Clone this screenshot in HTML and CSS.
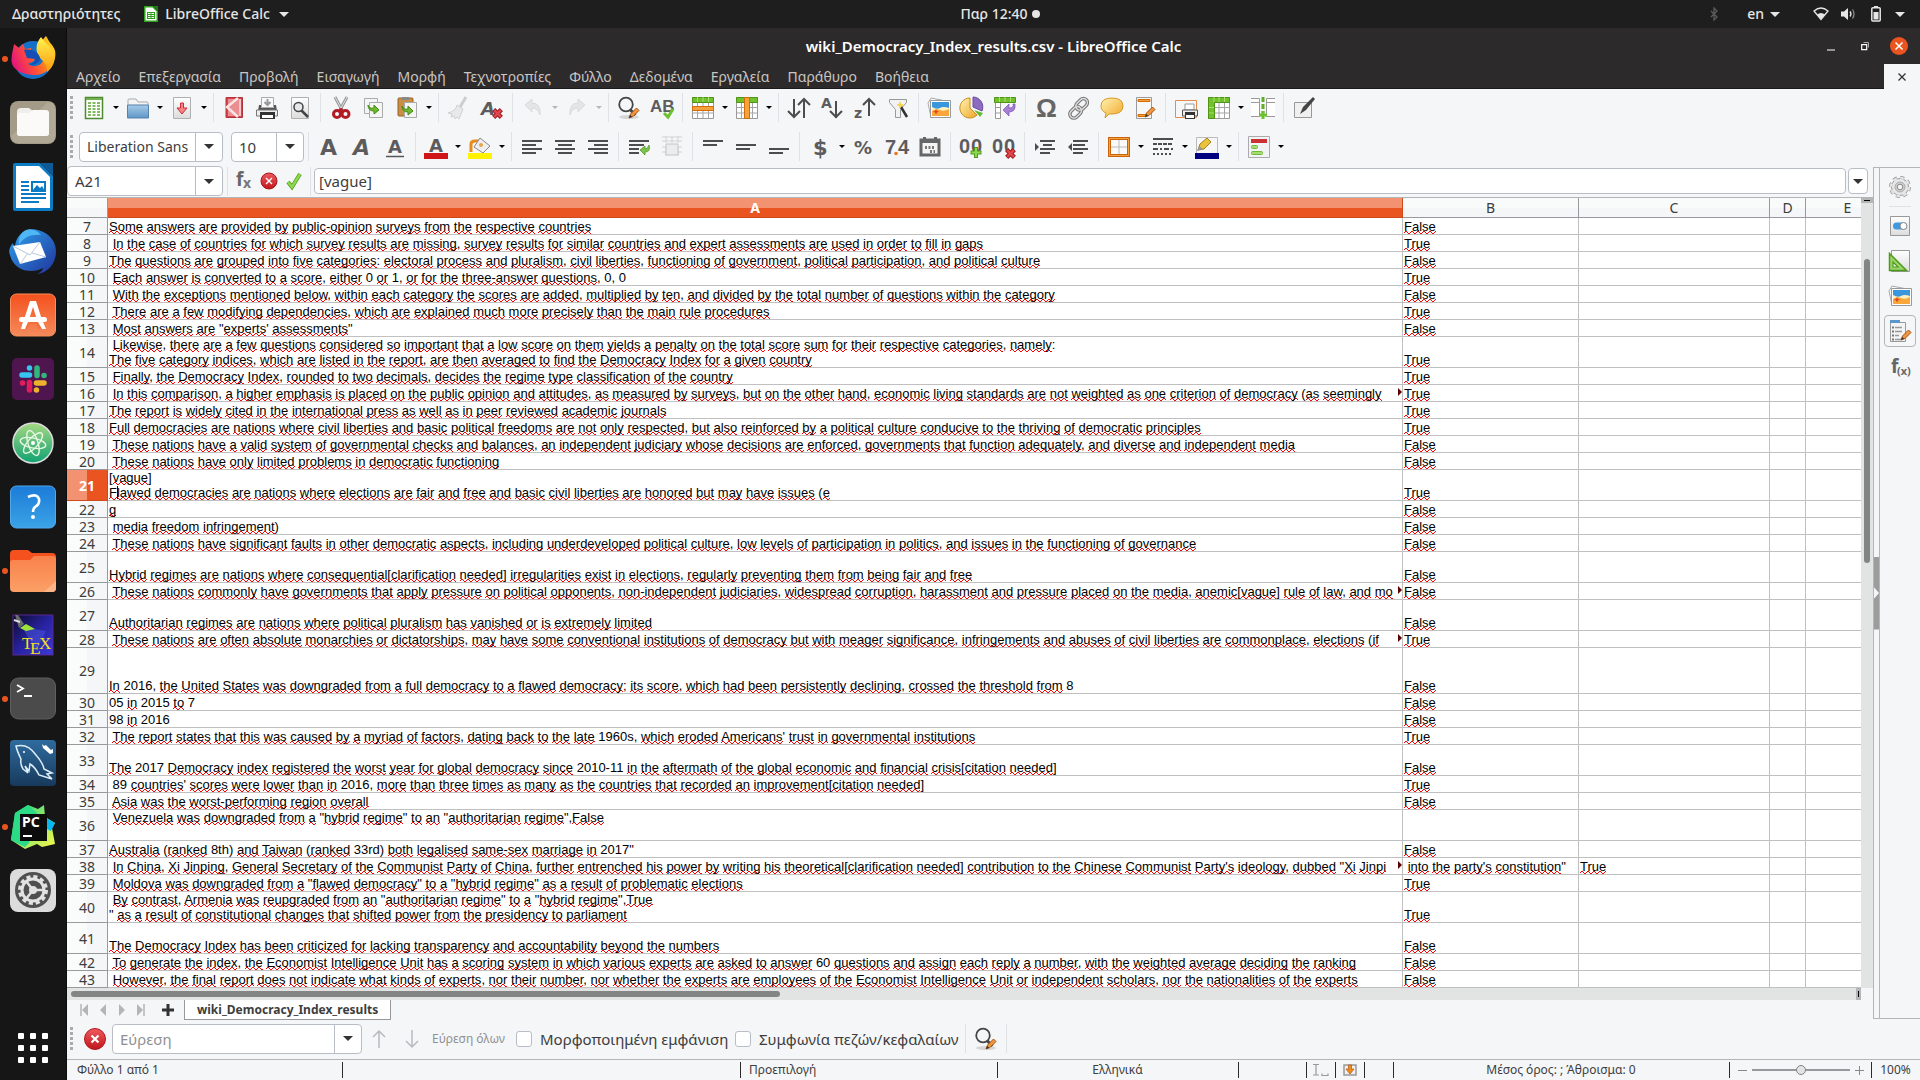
FILE: index.html
```html
<!DOCTYPE html>
<html lang="el">
<head>
<meta charset="utf-8">
<title>wiki_Democracy_Index_results.csv - LibreOffice Calc</title>
<link rel="stylesheet" href="styles.css">
</head>
<body>
<svg width="0" height="0" class="defs" aria-hidden="true">
  <defs>
    <linearGradient id="gFox" x1="0" y1="0.6" x2="1" y2="0.2"><stop offset="0" stop-color="#e3187b"/><stop offset=".35" stop-color="#ff4a3b"/><stop offset=".7" stop-color="#ff9412"/><stop offset="1" stop-color="#ffe22b"/></linearGradient>
    <linearGradient id="gFlame" x1="0" y1="0" x2="0" y2="1"><stop offset="0" stop-color="#fff44f"/><stop offset="1" stop-color="#ff980e"/></linearGradient>
    <linearGradient id="gBird" x1="0" y1="0" x2="1" y2="1"><stop offset="0" stop-color="#2fa3ee"/><stop offset="1" stop-color="#20339b"/></linearGradient>
    <linearGradient id="gSoft" x1="0" y1="0" x2="0" y2="1"><stop offset="0" stop-color="#f4511e"/><stop offset="1" stop-color="#f58a5b"/></linearGradient>
    <linearGradient id="gAtom" x1="0" y1="0" x2="0" y2="1"><stop offset="0" stop-color="#a5d982"/><stop offset="1" stop-color="#0fa273"/></linearGradient>
    <linearGradient id="gHelp" x1="0" y1="0" x2="0" y2="1"><stop offset="0" stop-color="#1c7bd8"/><stop offset="1" stop-color="#3ba3e6"/></linearGradient>
    <linearGradient id="gOrange" x1="0" y1="0" x2="0" y2="1"><stop offset="0" stop-color="#f9814b"/><stop offset="1" stop-color="#fba066"/></linearGradient>
    <linearGradient id="gTex" x1="0" y1="0" x2="1" y2="1"><stop offset="0" stop-color="#0b0b28"/><stop offset=".5" stop-color="#2822a0"/><stop offset="1" stop-color="#3b3bd8"/></linearGradient>
    <linearGradient id="gSql" x1="0" y1="0" x2="0" y2="1"><stop offset="0" stop-color="#2f6b9e"/><stop offset="1" stop-color="#173a5c"/></linearGradient>
    <linearGradient id="gPc" x1="0" y1="0" x2="1" y2="1"><stop offset="0" stop-color="#21d789"/><stop offset="1" stop-color="#fcf84a"/></linearGradient>
    <linearGradient id="gPaper" x1="0" y1="0" x2="0" y2="1"><stop offset="0" stop-color="#ffffff"/><stop offset="1" stop-color="#dcdcdc"/></linearGradient>
    <linearGradient id="gBlue" x1="0" y1="0" x2="0" y2="1"><stop offset="0" stop-color="#a8cbe8"/><stop offset="1" stop-color="#5f97c6"/></linearGradient>
    <linearGradient id="gGold" x1="0" y1="0" x2="1" y2="1"><stop offset="0" stop-color="#fff3b0"/><stop offset="1" stop-color="#f0a62a"/></linearGradient>
    <linearGradient id="gRed" x1="0" y1="0" x2="0" y2="1"><stop offset="0" stop-color="#ef5a5f"/><stop offset="1" stop-color="#c0171c"/></linearGradient>
    <symbol id="paper" viewBox="0 0 24 24"><path d="M3.500 1.500h17v21h-17z" fill="url(#gPaper)" stroke="#b0b0b0"/></symbol>
    <symbol id="pencil" viewBox="0 0 12 12"><path d="M1 11l1.500-4L8.500 1l2.500 2.500-6 6z" fill="#f0953a" stroke="#a3561a"/><path d="M1 11l1.300-3 1.800 1.800z" fill="#333"/></symbol>
    <symbol id="lens" viewBox="0 0 24 24"><ellipse cx="12" cy="21" rx="10" ry="2" fill="#d5d6d8"/><path d="M12.500 13l6 6" stroke="#444" stroke-width="3"/><circle cx="9" cy="8.500" r="6.800" fill="#f4f6f8" stroke="#454545" stroke-width="1.800"/></symbol>
    <symbol id="photo" viewBox="0 0 24 24"><path d="M1 7L4 2l15 3v14l-15 2z" fill="#fafafa" stroke="#a9a9a9"/><path d="M3.500 4.500h20v17h-20z" fill="#fff" stroke="#999"/><path d="M5 6h17v14H5z" fill="#3a96dd"/><path d="M5 11q5 3 8 1t9 0v8H5z" fill="#fff0c0"/><path d="M5 15q4-3 8-1t9-1v7H5z" fill="#f9a73b"/><path d="M9 13l1 2 2 .5-2 1-1 2-1-2-2-1 2-.5z" fill="#e8441d"/></symbol>
    <symbol id="cross" viewBox="0 0 10 10"><path d="M1.500 1.500l7 7m0-7l-7 7" stroke="#9e1b22" stroke-width="4"/><path d="M2 2l6 6m0-6l-6 6" stroke="#e1464d" stroke-width="2.200"/></symbol>
    <symbol id="grid" viewBox="0 0 24 24"><path d="M1.500 1.500h21v21h-21z" fill="#fff" stroke="#999"/><path d="M1.500 6.500h21M1.500 11.500h21M1.500 17h21M6.500 1.500v21M12 1.500v21M17.500 1.500v21" stroke="#a5a5a5" fill="none"/></symbol>
  </defs>
</svg>

<header class="topbar">
  <div class="top-left"><button class="top-btn">Δραστηριότητες</button>
    <button class="top-btn app"><svg width="14" height="16" viewBox="0 0 14 16"><path d="M0 0h9l5 5v11H0z" fill="#2ba11a"/><path d="M1.500 1.500h7l4 4v9h-11z" fill="#fff"/><path d="M9 0h5v5z" fill="#1d7d12"/><path d="M3 6h8v7H3z" fill="#2ba11a"/><path d="M4 7.500h2.500M7.500 7.500H10M4 9.500h2.500M7.500 9.500H10M4 11.500h2.500M7.500 11.500H10" stroke="#fff"/></svg><span>LibreOffice Calc</span><i class="tri"></i></button></div>
  <button class="top-btn clock">Παρ 12:40<i class="dot"></i></button>
  <div class="top-right">
    <svg class="bt" width="8" height="14" viewBox="0 0 8 14"><path d="M1 4l6 6-3 3V1l3 3-6 6" fill="none" stroke="#5c5c5c" stroke-width="1.300"/></svg>
    <button class="top-btn lang">en<i class="tri"></i></button>
    <svg class="wifi" width="16" height="14" viewBox="0 0 16 14"><path d="M1 4q7-6 14 0L8 12.500z" fill="none" stroke="#e6e6e6" stroke-width="1.300"/><path d="M4 7.500q4-3 8 0l-4 5z" fill="#e6e6e6"/></svg>
    <svg class="vol" width="16" height="14" viewBox="0 0 16 14"><path d="M0 4.500h3L7 1v12L3 9.500H0z" fill="#e6e6e6"/><path d="M9 4.500q2 2.500 0 5" fill="none" stroke="#e6e6e6" stroke-width="1.300"/><path d="M11.500 2.500q3 4.500 0 9" fill="none" stroke="#888" stroke-width="1.300"/></svg>
    <svg class="bat" width="10" height="16" viewBox="0 0 10 16"><path d="M3 0h4v2H3z" fill="#e6e6e6"/><rect x=".8" y="1.800" width="8.400" height="13.200" rx="1" fill="none" stroke="#e6e6e6" stroke-width="1.500"/><path d="M2.500 6h5v7.500h-5z" fill="#e6e6e6"/></svg>
    <i class="tri"></i>
  </div>
</header>

<div class="desktop">
<nav class="dock" aria-label="Dock">
  <a class="run" href="#"><svg width="46" height="46" viewBox="0 0 46 46"><circle cx="23" cy="24" r="19" fill="#1670c8"/><path d="M4 8l5 4 4-4 2 5 6-1c1 2-1 4-3 5l-1 4 8 1c0 3-4 5-7 5 3 5 12 4 15-2 4-8-2-13-2-16 0-4 3-7 5-9 2 3 3 6 6 9 3 4 4 7 3 13-2 10-10 17-20 17S1.500 35 1.500 24C1.500 18 3 14 4 8z" fill="url(#gFox)"/><path d="M31 1c2 4 11 10 13 17 2 8-2 14-7 18 0-7-2-9-6-13-6-6-6-15 0-22z" fill="url(#gFlame)"/><path d="M14 14c8-2 16 3 16 9-1 5-8 7-12 5 4 0 7-2 7-5l-8-1z" fill="#1450b4"/></svg></a>
  <a href="#"><svg width="46" height="46" viewBox="0 0 46 46"><rect x="0" y="1" width="46" height="43" rx="8" fill="#a39a88"/><path d="M1 36L38 2q7 0 7 7v27q0 7-7 7H8q-6 0-7-7z" fill="#b1a896"/><path d="M7 12q0-4 4-4h8l4 3h12q4 0 4 4v18q0 3-3 3H10q-3 0-3-3z" fill="#f0eeea"/><path d="M7 16q0-3 3-3h9l4-3h13q3 0 3 3v20q0 3-3 3H10q-3 0-3-3z" fill="#fbfaf8"/></svg></a>
  <a href="#"><svg width="46" height="48" viewBox="0 0 46 48"><path d="M3 2q0-2 2-2h25l13 13v33q0 2-2 2H5q-2 0-2-2z" fill="#0b7cc4"/><path d="M6 3h23l11 11v31H6z" fill="#fff"/><path d="M30 0h13v13z" fill="#0d5b96"/><path d="M11 19h8M11 23h8M11 27h8M11 31h25M11 35h25M11 39h18" stroke="#0b7cc4" stroke-width="2"/><path d="M22 19h13v9H22z" fill="#fff" stroke="#0b7cc4" stroke-width="2"/><path d="M22 28l5-6 3 3 2-2 3 5z" fill="#0b7cc4"/></svg></a>
  <a href="#"><svg width="48" height="48" viewBox="0 0 48 48"><path d="M14 5C24-2 42 5 46 18c4 14-5 28-18 29 4-2 6-4 6-6-10 6-29 4-33-13-2-4 0-9 3-12 0 2 1 3 2 3 1-7 4-11 8-14z" fill="url(#gBird)"/><path d="M17 3c-6 3-8 9-7 15 4-8 13-11 22-10C28 3 22 1 17 3z" fill="#4fb7f5"/><path d="M4 19l27-4 6 15-26 7z" fill="#fff"/><path d="M4 19l17 9 10-13M11 37l8-11M37 30L23 26" stroke="#b9c8da" fill="none"/></svg></a>
  <a href="#"><svg width="46" height="46" viewBox="0 0 46 46"><rect x=".5" y="2" width="45" height="42" rx="6" fill="url(#gSoft)" stroke="#f8905d"/><path d="M20 9h6l8 25h-5L23 15l-6 19h-5z" fill="#fff"/><path d="M17 30h12l4 7h-4l-3-5h-6l-3 5h-5z" fill="#f4713c"/><rect x="9" y="25" width="28" height="5" rx="2.500" fill="#fff"/><path d="M13 30h5l-3 7h-4zM28 30h5l3 7h-4z" fill="#fff"/></svg></a>
  <a href="#"><svg width="42" height="42" viewBox="0 0 42 42"><rect width="42" height="42" rx="5" fill="#4f154f"/><g stroke-width="5.500" stroke-linecap="round"><path d="M10 17h7.500M17.500 10v.1" stroke="#36c5f0"/><path d="M25 10v7.500M32 17.500h.1" stroke="#2eb67d"/><path d="M32 25h-7.500M24.500 32v.1" stroke="#ecb22e"/><path d="M17.500 32v-7.500M10.500 25h.1" stroke="#e01e5a"/></g></svg></a>
  <a href="#"><svg width="42" height="42" viewBox="0 0 42 42"><circle cx="21" cy="21" r="20" fill="url(#gAtom)" stroke="#ddd" stroke-width="1.500"/><g fill="none" stroke="#e9f7e4" stroke-width="1.400"><ellipse cx="21" cy="21" rx="13" ry="5" transform="rotate(12 21 21)"/><ellipse cx="21" cy="21" rx="13" ry="5" transform="rotate(72 21 21)"/><ellipse cx="21" cy="21" rx="13" ry="5" transform="rotate(132 21 21)"/></g><circle cx="21" cy="21" r="2" fill="#fff"/></svg></a>
  <a href="#"><svg width="46" height="46" viewBox="0 0 46 46"><rect x=".5" y="2" width="45" height="42" rx="6" fill="url(#gHelp)" stroke="#53a8ea"/><path d="M18 13q9-4 11 2 1 5-4 8-2 2-2 5" fill="none" stroke="#fff" stroke-width="2.600"/><circle cx="23" cy="33" r="2" fill="#fff"/></svg></a>
  <a class="run" href="#"><svg width="46" height="46" viewBox="0 0 46 46"><path d="M0 6q0-4 4-4h14l4 3h20q4 0 4 4v10H0z" fill="#f4511e"/><path d="M0 15q0-3 3-3h17l4-4h19q3 0 3 3v29q0 4-4 4H4q-4 0-4-4z" fill="url(#gOrange)"/><path d="M34 44l12-11v7q0 4-4 4z" fill="#fdb588"/></svg></a>
  <a href="#"><svg width="42" height="42" viewBox="0 0 42 42"><rect x="1" y="1" width="40" height="40" fill="url(#gTex)" stroke="#5b2691"/><path d="M10 13l24 4-10 20z" fill="#4a5ae0" opacity=".5"/><path d="M3 1h3l6 9-5 4z" fill="#6b6b70"/><path d="M2 6l6 2" stroke="#ddd" stroke-width="2"/><path d="M8 14l6-4 9 5-9 2z" fill="#9be23a"/><text x="10" y="35" class="tex">T</text><text x="18" y="40" class="tex">E</text><text x="27" y="35" class="tex">X</text></svg></a>
  <a class="run" href="#"><svg width="46" height="46" viewBox="0 0 46 46"><rect x=".5" y="2" width="45" height="41" rx="8" fill="#4b4b4b" stroke="#5f5f5f"/><path d="M7 9l6 3.500L7 16M14 20h8" fill="none" stroke="#fff" stroke-width="1.800"/></svg></a>
  <a href="#"><svg width="46" height="46" viewBox="0 0 46 46"><rect width="46" height="46" rx="4" fill="url(#gSql)"/><path d="M6 6q12-3 20 9 7 8 8 14l8 4-5 1 5 5-13-4q-4-8-9-11l-1 7-4-5 3 7-5-4q-3-5-2-10-4-8-5-13z" fill="none" stroke="#dcecf8" stroke-width="1.500"/><circle cx="14" cy="12" r="1" fill="#fff"/><path d="M32 4q2 3 4 1l5 5 2-1v4l-3 1-7-6z" fill="#fff"/></svg></a>
  <a class="run" href="#"><svg width="46" height="46" viewBox="0 0 46 46"><path d="M5 9L18 1l10 4 6-4 1 12 10 6-3 5 3 16-13 3-5-3-12 5L1 36z" fill="url(#gPc)"/><path d="M35 13l10 6-4 8-6-3z" fill="#08b8f0"/><path d="M5 9L18 1l9 8-8 30-4 4L1 36z" fill="#2bdb86"/><path d="M10 10h27v27H10z" fill="#0c0c0c"/><text x="12" y="23" class="pc">PC</text><path d="M13 32h9" stroke="#fff" stroke-width="2"/></svg></a>
  <a href="#"><svg width="46" height="46" viewBox="0 0 46 46"><rect x="0" y="1" width="46" height="43" rx="8" fill="#dcdcdc"/><circle cx="23" cy="22" r="18" fill="#505050"/><circle cx="23" cy="22" r="13" fill="none" stroke="#e2e2e2" stroke-width="4" stroke-dasharray="4 2.800"/><circle cx="23" cy="22" r="11" fill="none" stroke="#e2e2e2" stroke-width="3"/><path d="M23 22L16 13M23 22h11M23 22l-7 9" stroke="#e2e2e2" stroke-width="2.500"/><circle cx="23" cy="22" r="4" fill="#e2e2e2"/></svg></a>
  <button class="apps" aria-label="Εφαρμογές"><i></i><i></i><i></i><i></i><i></i><i></i><i></i><i></i><i></i></button>
</nav>

<div class="window">
  <div class="titlebar"><h1>wiki_Democracy_Index_results.csv - LibreOffice Calc</h1>
    <div class="winbtns"><button aria-label="Ελαχιστοποίηση"><svg width="8" height="9"><path d="M0 8h8" stroke="#fff" stroke-width="1"/></svg></button><button aria-label="Επαναφορά"><svg width="8" height="8" viewBox="0 0 8 8"><path d="M.7 2.700h5v5h-5z" fill="none" stroke="#fff" stroke-width="1.200"/><path d="M2.500.5h5v5" fill="none" stroke="#aaa"/></svg></button><button aria-label="Κλείσιμο" class="close"><svg width="8" height="8"><path d="M.5.5l7 7m0-7l-7 7" stroke="#fff" stroke-width="1.500"/></svg></button></div>
  </div>
  <div class="menubar">
    <nav><a href="#">Αρχείο</a><a href="#">Επεξεργασία</a><a href="#">Προβολή</a><a href="#">Εισαγωγή</a><a href="#">Μορφή</a><a href="#">Τεχνοτροπίες</a><a href="#">Φύλλο</a><a href="#">Δεδομένα</a><a href="#">Εργαλεία</a><a href="#">Παράθυρο</a><a href="#">Βοήθεια</a></nav>
    <button class="closedoc" aria-label="Κλείσιμο εγγράφου"><svg width="8" height="8"><path d="M.5.5l7 7m0-7l-7 7" stroke="#333" stroke-width="1.300"/></svg></button>
  </div>

  <div class="toolbar">
    <i class="grip"></i>
    <button class="tb"><svg viewBox="0 0 24 24"><path d="M3.500 1.500h17v21h-17z" fill="#fff" stroke="#4b8a2e" stroke-width="1.500"/><path d="M4 2h16v2H4z" fill="#72b24c"/><path d="M6 7h12M6 10h12M6 13h12M6 16h12M6 19h12" stroke="#5ba32e" stroke-width="1.500" stroke-dasharray="3 1.500"/></svg></button><button class="dd"></button>
    <button class="tb"><svg viewBox="0 0 24 24"><path d="M2 4q0-1 1-1h7l2 3h9q1 0 1 1v5H2z" fill="#f4f4f4" stroke="#aaa"/><path d="M1.500 9h21v13h-21z" fill="url(#gBlue)" stroke="#5583ab"/></svg></button><button class="dd"></button>
    <button class="tb"><svg viewBox="0 0 24 24"><use href="#paper"/><path d="M10.500 7h3v5h3.500l-5 6-5-6h3.500z" fill="#f3848a" stroke="#cf2b35"/></svg></button><button class="dd"></button>
    <i class="sep"></i>
    <button class="tb"><svg viewBox="0 0 24 24"><path d="M4 1.500h16.500v20H4z" fill="#d8434b" stroke="#b0343b"/><path d="M6 3h13v17H6z" fill="#ea8e92"/><path d="M16 2L5 11l11 10" fill="none" stroke="#fbe4e4" stroke-width="2.500"/><path d="M18 3v17" stroke="#fff" stroke-width="1"/></svg></button>
    <button class="tb"><svg viewBox="0 0 24 24"><path d="M6.500 1.500h12v10h-12z" fill="#fafafa" stroke="#aaa"/><path d="M12.500 3v5m-3-2l3 3 3-3" fill="none" stroke="#999" stroke-width="2"/><path d="M4 9h2v3h13V9h2l1 6H3z" fill="#555"/><path d="M1.500 14h21v6h-21z" fill="#eee" stroke="#777"/><path d="M5 16h15v7H5z" fill="#333"/><path d="M7 19h11v3H7z" fill="#fff"/></svg></button>
    <button class="tb"><svg viewBox="0 0 24 24"><use href="#paper"/><path d="M13 14l7 7" stroke="#444" stroke-width="2.500"/><circle cx="10.500" cy="11" r="4.500" fill="#e4e8ea" stroke="#444" stroke-width="1.500"/></svg></button>
    <i class="sep"></i>
    <button class="tb"><svg viewBox="0 0 24 24"><path d="M6 1l7 13M18 1l-7 13" stroke="#999" stroke-width="3"/><path d="M6 1l7 13M18 1l-7 13" stroke="#ddd"/><circle cx="8" cy="18" r="3.500" fill="none" stroke="#b21b24" stroke-width="3"/><circle cx="16.500" cy="18" r="3.500" fill="none" stroke="#b21b24" stroke-width="3"/><circle cx="12" cy="14" r="2" fill="#b21b24"/></svg></button>
    <button class="tb"><svg viewBox="0 0 24 24"><path d="M2.500 2.500h13v15h-13z" fill="#f5f5f5" stroke="#aaa"/><path d="M7.500 6.500h13v15h-13z" fill="#f5f5f5" stroke="#aaa"/><path d="M6 9q1 4 6 3V9l5 5-5 4v-3q-6 0-6-6z" fill="#6fb92c" stroke="#458818"/></svg></button>
    <button class="tb"><svg viewBox="0 0 24 24"><rect x="3" y="2" width="15" height="18" rx="1" fill="#c98f45" stroke="#946322"/><path d="M7 1h7v3H7z" fill="#888"/><path d="M9.500 6.500h12v15h-12z" fill="#f5f5f5" stroke="#aaa"/><path d="M7 10q1 4 6 3v-3l5 5-5 4v-3q-6 0-6-6z" fill="#6fb92c" stroke="#458818"/></svg></button><button class="dd"></button>
    <i class="sep"></i>
    <button class="tb faded"><svg viewBox="0 0 24 24"><path d="M19 1l-6 10" stroke="#c5c5c5" stroke-width="3"/><path d="M10 9l6 4-4 10-2-2-2 2-1-3-3 1 1-3-4-1q8-2 9-8z" fill="#e6e6e6" stroke="#c9c9c9"/></svg></button>
    <button class="tb"><svg viewBox="0 0 24 24"><text x="1" y="19" class="ital big">A</text><use href="#cross" x="12" y="12" width="11" height="11"/></svg></button>
    <i class="sep"></i>
    <button class="tb faded"><svg viewBox="0 0 24 24"><path d="M4 9l7-6v4q9 0 8 12-2-7-8-7v4z" fill="#dfe1e3" stroke="#d2d4d6"/></svg></button><button class="dd off"></button>
    <button class="tb faded"><svg viewBox="0 0 24 24"><path d="M20 9l-7-6v4q-9 0-8 12 2-7 8-7v4z" fill="#dfe1e3" stroke="#d2d4d6"/></svg></button><button class="dd off"></button>
    <i class="sep"></i>
    <button class="tb"><svg viewBox="0 0 24 24"><use href="#lens"/><use href="#pencil" x="11" y="11" width="12" height="12"/></svg></button>
    <button class="tb"><svg viewBox="0 0 24 24"><text x="0" y="16" class="ab">AB</text><path d="M14 17l4 4 5-8" fill="none" stroke="#6cc22e" stroke-width="3"/></svg></button>
    <i class="sep"></i>
    <button class="tb"><svg viewBox="0 0 24 24"><use href="#grid"/><path d="M1.500 1.500h21v5h-21z" fill="#72c02c" stroke="#4f9417"/><path d="M6.500 1v5M12 1v5M17.500 1v5" stroke="#a6e070"/><path d="M1.500 10.500h21v4h-21z" fill="#f6a13a" stroke="#d16c0a"/></svg></button><button class="dd"></button>
    <button class="tb"><svg viewBox="0 0 24 24"><use href="#grid"/><path d="M1.500 1.500h21v5h-21z" fill="#72c02c" stroke="#4f9417"/><path d="M9.500 1.500h5v21h-5z" fill="#f6a13a" stroke="#d16c0a"/></svg></button><button class="dd"></button>
    <i class="sep"></i>
    <button class="tb"><svg viewBox="0 0 24 24"><path d="M7 3v18M1 15l6 6 6-6M17 22V3M11 9l6-6 6 6" fill="none" stroke="#4d4d4f" stroke-width="2"/></svg></button>
    <button class="tb"><svg viewBox="0 0 24 24"><text x="1" y="12" class="srt">A</text><path d="M16 5v17M10 15l6 6 6-6" fill="none" stroke="#4d4d4f" stroke-width="2"/></svg></button>
    <button class="tb"><svg viewBox="0 0 24 24"><text x="1" y="22" class="srt">z</text><path d="M16 20V3M10 9l6-6 6 6" fill="none" stroke="#4d4d4f" stroke-width="2"/></svg></button>
    <button class="tb"><svg viewBox="0 0 24 24"><path d="M3.500 3.500h17v3l-6 7v8h-5v-8l-6-7z" fill="#f2f2f2" stroke="#999"/><path d="M15 11l6 10" stroke="#333" stroke-width="2.500"/><path d="M14 6v6M11 9h6" stroke="#f4cf3a" stroke-width="1.500"/></svg></button>
    <i class="sep"></i>
    <button class="tb"><svg viewBox="0 0 24 24"><use href="#photo"/></svg></button>
    <button class="tb"><svg viewBox="0 0 24 24"><path d="M10 12V2a10 10 0 1 0 7 17z" fill="url(#gGold)" stroke="#c58b1c"/><path d="M13 11V1a10 10 0 0 1 9 14z" fill="#8d6bc0" stroke="#6b4da0"/><path d="M14 14l9 3-3 4z" fill="#6bb838"/></svg></button>
    <button class="tb"><svg viewBox="0 0 24 24"><path d="M2.500 6.500h5v16h-5zM2.500 11.500h5M2.500 17h5" fill="#fff" stroke="#999"/><path d="M1.500 1.500h21v5h-21z" fill="#72c02c" stroke="#4f9417"/><path d="M6.500 1v5M12 1v5M17.500 1v5" stroke="#a6e070"/><path d="M22 8q1 8-6 8v4l-6-6 6-6v4q5 0 4-4z" fill="#a57ed6" stroke="#7a51b3" stroke-width=".7"/></svg></button>
    <i class="sep"></i>
    <button class="tb"><svg viewBox="0 0 24 24"><text x="2" y="21" class="omega">Ω</text></svg></button>
    <button class="tb"><svg viewBox="0 0 24 24" fill="none"><g stroke="#777" stroke-width="3.500"><rect x="11" y="2" width="8" height="13" rx="4" transform="rotate(45 15 8)"/><rect x="5" y="10" width="8" height="13" rx="4" transform="rotate(45 9 16)"/></g><g stroke="#ddd" stroke-width="1.500"><rect x="11" y="2" width="8" height="13" rx="4" transform="rotate(45 15 8)"/><rect x="5" y="10" width="8" height="13" rx="4" transform="rotate(45 9 16)"/></g></svg></button>
    <button class="tb"><svg viewBox="0 0 24 24"><path d="M12 2q11 0 11 8t-11 8q-2 0-3 0l-4 4 1-5q-5-2-5-7 0-8 11-8z" fill="url(#gGold)" stroke="#d49a2b"/></svg></button>
    <button class="tb"><svg viewBox="0 0 24 24"><path d="M3.500 1.500h15v21h-15z" fill="#f7f7f7" stroke="#999"/><path d="M5 3.500h12v2H5zM5 18.500h8v2H5z" fill="#f6a13a" stroke="#d16c0a"/><use href="#pencil" x="11" y="10" width="12" height="12"/></svg></button>
    <i class="sep"></i>
    <button class="tb"><svg viewBox="0 0 24 24"><path d="M1.500 4.500h21v17h-21z" fill="#f7f7f7" stroke="#e48c50"/><path d="M11 8h9v6h-9z" fill="#fff" stroke="#999"/><path d="M8.500 14h15v6h-15z" fill="#eee" stroke="#555"/><path d="M11 16h10v7H11z" fill="#333"/><path d="M12 19h8v3h-8z" fill="#fff"/></svg></button>
    <button class="tb"><svg viewBox="0 0 24 24"><use href="#grid"/><path d="M1.500 1.500h21v5h-15v16h-6z" fill="#72c02c" stroke="#4f9417"/><path d="M7 1v5M12 1v5M17.500 1v5M2 11.500h5M2 17h5" stroke="#a6e070"/></svg></button><button class="dd"></button>
    <button class="tb"><svg viewBox="0 0 24 24"><path d="M0 2.500h8.500v18H0M0 6.500h8M24 2.500h-8.500v18H24M24 6.500h-8" fill="#fff" stroke="#999"/><path d="M12 1v16" stroke="#5fae25" stroke-width="3" stroke-dasharray="5 2"/><path d="M12 15v8M8 19h8" stroke="#6cc22e" stroke-width="3"/></svg></button>
    <i class="sep"></i>
    <button class="tb"><svg viewBox="0 0 24 24"><path d="M2.500 6.500h17v15h-17z" fill="#f0f0f0" stroke="#999"/><path d="M8 18l3-7L21 1l2 2-9 11z" fill="#444"/></svg></button>
  </div>

  <div class="toolbar">
    <i class="grip"></i>
    <div class="combo font"><input aria-label="Γραμματοσειρά" value="Liberation Sans"><button class="drop" aria-label="Λίστα"></button></div>
    <div class="combo size"><input aria-label="Μέγεθος" value="10"><button class="drop" aria-label="Λίστα"></button></div>
    <i class="sep"></i>
    <button class="tb"><svg viewBox="0 0 24 24"><text x="3" y="20" class="big wide">A</text></svg></button>
    <button class="tb"><svg viewBox="0 0 24 24"><text x="3" y="20" class="ital big wide">A</text></svg></button>
    <button class="tb"><svg viewBox="0 0 24 24"><text x="5" y="18" class="big">A</text><path d="M3 21.500h18" stroke="#555" stroke-width="1.500"/></svg></button>
    <i class="sep"></i>
    <button class="tb"><svg viewBox="0 0 24 24"><text x="5" y="17" class="big">A</text><path d="M0 18h24v6H0z" fill="#cf1519"/></svg></button><button class="dd"></button>
    <button class="tb"><svg viewBox="0 0 24 24"><path d="M3 17V9q0-3 4-3h5" fill="none" stroke="#ea8a1d" stroke-width="3"/><path d="M12 3l10 8-7 7-9-6z" fill="#eee" stroke="#888"/><circle cx="13" cy="10" r="2" fill="#e6a64a"/><path d="M0 18h24v6H0z" fill="#fff200"/></svg></button><button class="dd"></button>
    <i class="sep"></i>
    <button class="tb"><svg viewBox="0 0 24 24"><path d="M2 6h20M2 10h14M2 14h20M2 18h14" stroke="#4d4d4f" stroke-width="2"/></svg></button>
    <button class="tb"><svg viewBox="0 0 24 24"><path d="M2 6h20M5 10h14M2 14h20M5 18h14" stroke="#4d4d4f" stroke-width="2"/></svg></button>
    <button class="tb"><svg viewBox="0 0 24 24"><path d="M2 6h20M8 10h14M2 14h20M8 18h14" stroke="#4d4d4f" stroke-width="2"/></svg></button>
    <i class="sep"></i>
    <button class="tb"><svg viewBox="0 0 24 24"><path d="M2 6h20M2 10h15M2 14h10M2 18h10" stroke="#4d4d4f" stroke-width="2"/><path d="M22 10q2 7-4 7v3l-5-5 5-4v3q3 0 4-4z" fill="#7fc44a" stroke="#4a8f1c" stroke-width=".7"/></svg></button>
    <button class="tb faded"><svg viewBox="0 0 24 24"><path d="M2 2h20M2 6h20M6 1v7M12 1v7M18 1v7M2 12h20M2 17h20M6 12v9M18 12v9" stroke="#c9cacc"/><path d="M6 9h12v11H6z" fill="#e9eaec" stroke="#bbb"/></svg></button>
    <i class="sep"></i>
    <button class="tb"><svg viewBox="0 0 24 24"><path d="M2 6h20M2 10h14" stroke="#4d4d4f" stroke-width="2"/></svg></button>
    <button class="tb"><svg viewBox="0 0 24 24"><path d="M2 10h20M2 14h14" stroke="#4d4d4f" stroke-width="2"/></svg></button>
    <button class="tb"><svg viewBox="0 0 24 24"><path d="M2 14h20M2 18h14" stroke="#4d4d4f" stroke-width="2"/></svg></button>
    <i class="sep"></i>
    <button class="tb"><svg viewBox="0 0 24 24"><text x="5" y="20" class="big tall">$</text></svg></button><button class="dd"></button>
    <button class="tb"><svg viewBox="0 0 24 24"><text x="2" y="19" class="big">%</text></svg></button>
    <button class="tb"><svg viewBox="0 0 24 24"><text x="0" y="19" class="num">7</text><text x="13" y="19" class="num">4</text><circle cx="11" cy="18.500" r="1.800" fill="#e8771a"/></svg></button>
    <button class="tb"><svg viewBox="0 0 24 24"><path d="M3 5h18v15H3z" fill="#f4f4f4" stroke="#666" stroke-width="3"/><path d="M2 4h20v4H2zM5 2h3v3H5zM16 2h3v3h-3z" fill="#666"/><path d="M7 12.500h10M12 16.500h5" stroke="#777" stroke-width="3" stroke-dasharray="2 1.500"/></svg></button>
    <i class="sep"></i>
    <button class="tb"><svg viewBox="0 0 24 24"><text x="0" y="18" class="num">0</text><text x="12" y="18" class="num">0</text><path d="M17 12v11M11.500 17.500h11" stroke="#4f9a1c" stroke-width="4"/><path d="M17 13v9M12.500 17.500h9" stroke="#8ed850" stroke-width="2"/></svg></button>
    <button class="tb"><svg viewBox="0 0 24 24"><text x="0" y="18" class="num">0</text><text x="12" y="18" class="num">0</text><use href="#cross" x="13" y="13" width="11" height="11"/></svg></button>
    <i class="sep"></i>
    <button class="tb"><svg viewBox="0 0 24 24"><path d="M7 6h15M10 10h9M7 14h15M7 18h10" stroke="#4d4d4f" stroke-width="2"/><path d="M2 8l4 4-4 4z" fill="#4d4d4f"/></svg></button>
    <button class="tb"><svg viewBox="0 0 24 24"><path d="M7 6h15M7 10h12M7 14h15M7 18h10" stroke="#4d4d4f" stroke-width="2"/><path d="M6 8l-4 4 4 4z" fill="#4d4d4f"/></svg></button>
    <i class="sep"></i>
    <button class="tb"><svg viewBox="0 0 24 24"><path d="M2.500 3.500h19v17h-19z" fill="#fafafa" stroke="#c8640d" stroke-width="3"/><path d="M2.500 3.500h19v17h-19z" fill="none" stroke="#f6a13a"/><path d="M12 5v14M4 12h16" stroke="#bbb"/></svg></button><button class="dd"></button>
    <button class="tb"><svg viewBox="0 0 24 24"><path d="M2 4h20" stroke="#4d4d4f" stroke-width="2"/><path d="M2 9h20" stroke="#4d4d4f" stroke-width="2" stroke-dasharray="4 1"/><path d="M2 14h20" stroke="#4d4d4f" stroke-width="2" stroke-dasharray="5 2 2 2"/><path d="M2 19h20" stroke="#4d4d4f" stroke-width="2" stroke-dasharray="2 2"/></svg></button><button class="dd"></button>
    <button class="tb"><svg viewBox="0 0 24 24"><path d="M1.500 2.500h21v16h-21z" fill="#f7f7f7" stroke="#bbb"/><path d="M3 15l2-6 7-6 4 4-7 7z" fill="#eac33b" stroke="#a5811a"/><path d="M2 16l2-5 4 3z" fill="#999"/><path d="M0 18h24v6H0z" fill="#000080"/></svg></button><button class="dd"></button>
    <i class="sep"></i>
    <button class="tb"><svg viewBox="0 0 24 24"><path d="M1.500 1.500h21v21h-21z" fill="#f2f3f4" stroke="#aaa"/><path d="M4 4h16v4H4z" fill="#cc3134"/><rect x="4.500" y="10.500" width="6" height="3" rx="1" fill="#a5dd70" stroke="#6fb83a"/><rect x="4.500" y="16.500" width="11" height="3" rx="1" fill="#a5dd70" stroke="#6fb83a"/></svg></button><button class="dd"></button>
  </div>

  <div class="main">
    <div class="sheet">
      <div class="formula">
        <div class="combo name"><input aria-label="Πλαίσιο ονόματος" value="A21"><button class="drop" aria-label="Λίστα"></button></div>
        <i class="sep"></i>
        <button class="fb"><svg viewBox="0 0 20 20"><text x="2" y="15" class="fx">f</text><text x="9" y="17" class="fxs">x</text></svg></button>
        <button class="fb"><svg viewBox="0 0 20 20"><circle cx="10" cy="10" r="8" fill="url(#gRed)" stroke="#a8161b"/><path d="M7 7l6 6m0-6l-6 6" stroke="#fff" stroke-width="1.400"/></svg></button>
        <button class="fb"><svg viewBox="0 0 20 20"><path d="M4 11l4 5 8-13" fill="none" stroke="#4f9a1c" stroke-width="4"/><path d="M4 11l4 5 8-13" fill="none" stroke="#8ed850" stroke-width="2.500"/></svg></button>
        <i class="sep"></i>
        <input class="line" aria-label="Γραμμή εισαγωγής" value="[vague]">
        <button class="expand" aria-label="Ανάπτυξη"></button>
      </div>
      <div class="gridwrap">
        <table class="cells">
          <colgroup><col class="c0"><col class="ca"><col class="cb"><col class="cc"><col class="cd"><col></colgroup>
          <thead><tr><th></th><th class="sel">A</th><th>B</th><th>C</th><th>D</th><th class="last">E</th></tr></thead>
          <tbody id="rows"></tbody>
        </table>
        <div class="vscroll"><i class="split"></i><i class="thumb"></i></div>
      </div>
      <div class="hscroll"><i class="thumb"></i><i class="split"></i></div>
      <div class="tabs">
        <button aria-label="Πρώτο"><svg width="8" height="12"><path d="M1 0v12" stroke="#b4b5b7" stroke-width="1.500"/><path d="M8 0v12L2 6z" fill="#b4b5b7"/></svg></button>
        <button aria-label="Προηγούμενο"><svg width="8" height="12"><path d="M7 0v12L1 6z" fill="#b4b5b7"/></svg></button>
        <button aria-label="Επόμενο"><svg width="8" height="12"><path d="M1 0v12l6-6z" fill="#b4b5b7"/></svg></button>
        <button aria-label="Τελευταίο"><svg width="8" height="12"><path d="M7 0v12" stroke="#b4b5b7" stroke-width="1.500"/><path d="M0 0v12l6-6z" fill="#b4b5b7"/></svg></button>
        <button class="add" aria-label="Προσθήκη φύλλου"><svg width="12" height="12"><path d="M6 0v12M0 6h12" stroke="#333" stroke-width="3"/></svg></button>
        <button class="tab">wiki_Democracy_Index_results</button>
      </div>
    </div>
    <aside class="side">
      <button class="sash" aria-label="Πλευρική στήλη"><i></i></button>
      <div class="deck">
        <button class="sb"><svg viewBox="0 0 24 24"><circle cx="12" cy="12" r="9.500" fill="none" stroke="#999" stroke-width="3" stroke-dasharray="4 3.460"/><circle cx="12" cy="12" r="8.500" fill="#e8e8e8" stroke="#999"/><circle cx="12" cy="12" r="9" fill="none" stroke="#e4e4e4" stroke-width="2.500" stroke-dasharray="3.500 3.570"/><circle cx="12" cy="12" r="5" fill="#d0d0d0" stroke="#aaa"/><circle cx="12" cy="12" r="2.800" fill="#f5f6f8" stroke="#888"/></svg></button>
        <hr>
        <button class="sb"><svg viewBox="0 0 24 24"><path d="M2.500 2.500h19v19h-19z" fill="url(#gPaper)" stroke="#999"/><rect x="5" y="8.500" width="14" height="7" rx="3.500" fill="#3f9ae0"/><circle cx="15.500" cy="12" r="3.500" fill="#fff" stroke="#888"/></svg></button>
        <button class="sb"><svg viewBox="0 0 24 24"><path d="M3.500 1.500h18v21h-18z" fill="url(#gPaper)" stroke="#999"/><path d="M1.500 4.500v17h17z" fill="#9bd56a" stroke="#4d9a1a" stroke-width="1.500"/><path d="M5 13v5h5z" fill="#f2f2f2" stroke="#4d9a1a" stroke-width="1.200"/></svg></button>
        <button class="sb"><svg viewBox="0 0 24 24"><use href="#photo"/></svg></button>
        <button class="sb on"><svg viewBox="0 0 24 24"><path d="M2.500 3.500h15v19h-15z" fill="#f4f4f4" stroke="#999"/><path d="M2 1h10v3H2z" fill="#5a97cc"/><path d="M7 8.500h7M7 12.500h7M7 16.500h4M7 20.500h7" stroke="#999" stroke-width="1.500"/><path d="M4 8.500h2M4 12.500h2M4 16.500h2M4 20.500h2" stroke="#777" stroke-width="2"/><use href="#pencil" x="12" y="10" width="12" height="12"/></svg></button>
        <button class="sb"><svg viewBox="0 0 24 24"><text x="3" y="19" class="fx">f</text><text x="9" y="21" class="fxp">(x)</text></svg></button>
      </div>
    </aside>
  </div>

  <form class="find">
    <i class="grip"></i>
    <button type="button" class="stop" aria-label="Κλείσιμο"><svg width="24" height="24" viewBox="0 0 24 24"><circle cx="12" cy="12" r="10.500" fill="url(#gRed)" stroke="#b0181d"/><path d="M8.500 8.500l7 7m0-7l-7 7" stroke="#fff" stroke-width="2.200"/></svg></button>
    <div class="combo search"><input aria-label="Εύρεση" placeholder="Εύρεση"><button type="button" class="drop" aria-label="Λίστα"></button></div>
    <button type="button" class="tb"><svg viewBox="0 0 24 24"><path d="M12 21V4M6 10l6-6 6 6" fill="none" stroke="#b9babd" stroke-width="1.500"/></svg></button>
    <button type="button" class="tb"><svg viewBox="0 0 24 24"><path d="M12 3v17M6 14l6 6 6-6" fill="none" stroke="#b9babd" stroke-width="1.500"/></svg></button>
    <button type="button" class="all" disabled>Εύρεση όλων</button>
    <label class="w1"><input type="checkbox">Μορφοποιημένη εμφάνιση</label>
    <label class="w2"><input type="checkbox">Συμφωνία πεζών/κεφαλαίων</label>
    <i class="sep"></i>
    <button type="button" class="tb"><svg viewBox="0 0 24 24"><use href="#lens"/><use href="#pencil" x="11" y="11" width="12" height="12"/></svg></button>
    <i class="sep"></i>
  </form>

  <footer class="status">
    <div class="s1">Φύλλο 1 από 1</div><div class="s2"></div><div class="s3">Προεπιλογή</div><div class="s4">Ελληνικά</div><div class="s5"></div>
    <div class="s6"><svg width="17" height="14" viewBox="0 0 17 14"><path d="M1 1.500h6M4 1.500v10M1 12h6M10 10.500v2h6v-2" fill="none" stroke="#999" stroke-width="1.200"/></svg></div>
    <div class="s6"><svg width="14" height="12" viewBox="0 0 14 12"><path d="M1 1h12v10H1z" fill="#eee" stroke="#999" stroke-width="1.500"/><path d="M5.500 1h3v4h2.500l-4 5-4-5h2.500z" fill="#f08a1c" stroke="#b0580c" stroke-width=".7"/></svg></div>
    <div class="s6"></div>
    <div class="s7">Μέσος όρος: ; Άθροισμα: 0</div>
    <div class="s8"><button type="button" aria-label="Σμίκρυνση"><svg width="9" height="9"><path d="M0 4.500h9" stroke="#888"/></svg></button><input type="range" aria-label="Εστίαση" min="0" max="100" value="50"><button type="button" aria-label="Μεγέθυνση"><svg width="9" height="9"><path d="M0 4.500h9M4.500 0v9" stroke="#888"/></svg></button></div>
    <div class="s9">100%</div>
  </footer>
</div>
</div>
<script src="sheet.js"></script>
</body>
</html>
```
FILE: sheet.js
```js
// Each row: [number, text of A, text of B, row height in lines, options]
const rows = [
  [7, "Some answers are provided by public-opinion surveys from the respective countries", "False"],
  [8, " In the case of countries for which survey results are missing, survey results for similar countries and expert assessments are used in order to fill in gaps", "True"],
  [9, "The questions are grouped into five categories: electoral process and pluralism, civil liberties, functioning of government, political participation, and political culture", "False"],
  [10, " Each answer is converted to a score, either 0 or 1, or for the three-answer questions, 0, 0", "True"],
  [11, " With the exceptions mentioned below, within each category the scores are added, multiplied by ten, and divided by the total number of questions within the category", "False"],
  [12, " There are a few modifying dependencies, which are explained much more precisely than the main rule procedures", "True"],
  [13, " Most answers are \"experts' assessments\"", "False"],
  [14, " Likewise, there are a few questions considered so important that a low score on them yields a penalty on the total score sum for their respective categories, namely:\nThe five category indices, which are listed in the report, are then averaged to find the Democracy Index for a given country", "True", 2],
  [15, " Finally, the Democracy Index, rounded to two decimals, decides the regime type classification of the country", "True"],
  [16, " In this comparison, a higher emphasis is placed on the public opinion and attitudes, as measured by surveys, but on the other hand, economic living standards are not weighted as one criterion of democracy (as seemingly ", "True", 1, { more: true }],
  [17, "The report is widely cited in the international press as well as in peer reviewed academic journals", "True"],
  [18, "Full democracies are nations where civil liberties and basic political freedoms are not only respected, but also reinforced by a political culture conducive to the thriving of democratic principles", "True"],
  [19, " These nations have a valid system of governmental checks and balances, an independent judiciary whose decisions are enforced, governments that function adequately, and diverse and independent media", "False"],
  [20, " These nations have only limited problems in democratic functioning", "False"],
  [21, "[vague]\nFlawed democracies are nations where elections are fair and free and basic civil liberties are honored but may have issues (e", "True", 2, { active: true }],
  [22, "g", "False"],
  [23, " media freedom infringement)", "False"],
  [24, " These nations have significant faults in other democratic aspects, including underdeveloped political culture, low levels of participation in politics, and issues in the functioning of governance", "False"],
  [25, "Hybrid regimes are nations where consequential[clarification needed] irregularities exist in elections, regularly preventing them from being fair and free", "False", 2],
  [26, " These nations commonly have governments that apply pressure on political opponents, non-independent judiciaries, widespread corruption, harassment and pressure placed on the media, anemic[vague] rule of law, and mo", "False", 1, { more: true }],
  [27, "Authoritarian regimes are nations where political pluralism has vanished or is extremely limited", "False", 2],
  [28, " These nations are often absolute monarchies or dictatorships, may have some conventional institutions of democracy but with meager significance, infringements and abuses of civil liberties are commonplace, elections (if ", "True", 1, { more: true }],
  [29, "In 2016, the United States was downgraded from a full democracy to a flawed democracy; its score, which had been persistently declining, crossed the threshold from 8", "False", 3],
  [30, "05 in 2015 to 7", "False"],
  [31, "98 in 2016", "False"],
  [32, " The report states that this was caused by a myriad of factors, dating back to the late 1960s, which eroded Americans' trust in governmental institutions", "True"],
  [33, "The 2017 Democracy index registered the worst year for global democracy since 2010-11 in the aftermath of the global economic and financial crisis[citation needed]", "False", 2],
  [34, " 89 countries' scores were lower than in 2016, more than three times as many as the countries that recorded an improvement[citation needed]", "True"],
  [35, " Asia was the worst-performing region overall", "False"],
  [36, " Venezuela was downgraded from a \"hybrid regime\" to an \"authoritarian regime\",False\n ", "", 2],
  [37, "Australia (ranked 8th) and Taiwan (ranked 33rd) both legalised same-sex marriage in 2017\"", "False"],
  [38, " In China, Xi Jinping, General Secretary of the Communist Party of China, further entrenched his power by writing his theoretical[clarification needed] contribution to the Chinese Communist Party's ideology, dubbed \"Xi Jinpi", " into the party's constitution\"", 1, { more: true, c: "True" }],
  [39, " Moldova was downgraded from a \"flawed democracy\" to a \"hybrid regime\" as a result of problematic elections", "True"],
  [40, " By contrast, Armenia was reupgraded from an \"authoritarian regime\" to a \"hybrid regime\",True\n\" as a result of constitutional changes that shifted power from the presidency to parliament", "True", 2],
  [41, "The Democracy Index has been criticized for lacking transparency and accountability beyond the numbers", "False", 2],
  [42, " To generate the index, the Economist Intelligence Unit has a scoring system in which various experts are asked to answer 60 questions and assign each reply a number, with the weighted average deciding the ranking", "False"],
  [43, " However, the final report does not indicate what kinds of experts, nor their number, nor whether the experts are employees of the Economist Intelligence Unit or independent scholars, nor the nationalities of the experts", "False"]
];

// The spell checker marks every word that does not begin with a digit.
const spell = text => text.replace(/(?<!\w)[A-Za-z]+(?:['-][A-Za-z]+)*/g, word => `<u>${word}</u>`);

document.getElementById("rows").innerHTML = rows.map(([n, a, b, lines = 1, o = {}]) => {
  let first = spell(a);
  if (o.active) first = first.replace("<u>F", '<u>F<i class="caret"></i>');
  if (o.more) first += '<i class="more"></i>';
  return `<tr class="h${lines}${o.active ? " active" : ""}"><th>${n}</th><td>${first}</td><td>${spell(b)}</td><td>${spell(o.c || "")}</td><td></td><td class="last"></td></tr>`;
}).join("");
```
FILE: styles.css
```css
* { box-sizing: border-box; }
body { margin: 0; min-height: 100vh; display: flex; flex-direction: column; background: #161616; color: #3d3d3d; font: 14px/20px "Noto Sans", "Open Sans", sans-serif; }
button { margin: 0; padding: 0; border: 0; background: none; color: inherit; font: inherit; display: flex; align-items: center; justify-content: center; }
input { font: inherit; color: inherit; margin: 0; }
a { color: inherit; text-decoration: none; }
svg { display: block; flex: none; overflow: visible; }
.defs { position: absolute; }

.topbar { height: 28px; display: grid; grid-template-columns: 1fr auto 1fr; align-items: center; background: #1e1e1e; color: #e6e6e6; font-weight: 500; }
.top-left { display: flex; gap: 24px; padding-left: 12px; }
.app { gap: 7px; }
.app .tri { margin-left: 2px; }
.tri { border: 5px solid transparent; border-top-color: #e6e6e6; border-bottom: 0; }
.dot { width: 8px; height: 8px; border-radius: 4px; background: #e6e6e6; margin-left: 4px; }
.clock { padding-left: 80px; }
.top-right { display: flex; justify-content: flex-end; align-items: center; padding-right: 15px; }
.bt { margin-right: 29px; }
.lang { gap: 6px; margin-right: 33px; }
.wifi { margin-right: 12px; }
.vol, .bat { margin-right: 14px; }

.desktop { flex: 1; display: flex; }
.dock { width: 67px; flex: none; display: flex; flex-direction: column; align-items: center; background: #161616; border-right: 1px solid #0c0c0c; }
.dock a { position: relative; width: 100%; height: 64px; display: flex; align-items: center; justify-content: center; padding-bottom: 2px; }
.dock .run::before { content: ""; position: absolute; left: 2px; top: 28px; width: 6px; height: 6px; border-radius: 3px; background: #e95420; }
.apps { margin-top: auto; margin-bottom: 17px; display: grid; grid-template-columns: repeat(3, 6px); gap: 6px; }
.apps i { width: 6px; height: 6px; border-radius: 1px; background: #fff; }
.tex { font: 17px "Liberation Serif", serif; fill: #f5e022; }
.pc { font: bold 14px "Noto Sans", sans-serif; fill: #fff; }

.window { flex: 1; min-width: 0; display: flex; flex-direction: column; background: #f5f6f8; }
.titlebar { height: 36px; position: relative; display: flex; align-items: center; justify-content: center; background: #2d2a2b; color: #fff; }
.titlebar h1 { margin: 0; font-size: 15px; font-weight: 600; }
.winbtns { position: absolute; right: 12px; top: 9px; display: flex; }
.winbtns button { width: 18px; height: 18px; margin-left: 16px; }
.winbtns .close { border-radius: 9px; background: #e95420; }
.menubar { height: 25px; display: flex; justify-content: space-between; background: #2d2a2b; color: #c9c6c3; border-bottom: 1px solid #1c1a1b; }
.menubar nav { display: flex; gap: 18px; padding: 3px 0 0 9px; }
.closedoc { width: 36px; height: 25px; background: #f5f6f8; }

.toolbar { height: 39px; display: flex; align-items: center; padding: 0 0 2px 3px; }
.grip { flex: none; width: 3px; height: 23px; margin-right: 4px; background: repeating-linear-gradient(#a9abad 0 3px, transparent 3px 5px); }
.tb { width: 33px; height: 30px; flex: none; }
.tb svg { width: 24px; height: 24px; }
.faded { opacity: .8; }
.dd { width: 11px; height: 30px; flex: none; }
.dd::before { content: ""; border: 3px solid transparent; border-top-color: #000; border-bottom: 0; }
.dd.off::before { border-top-color: #b5b6b8; }
.sep { flex: none; width: 1px; height: 29px; margin: 0 3px 0 4px; background: #dfe1e4; }
.big { font: bold 20px "DejaVu Sans", sans-serif; fill: #5c5c5e; }
.big:not(.wide) { font-size: 18px; }
.big.tall { font-size: 21px; }
.wide { font-size: 22px; }
.ital { font-style: italic; }
.ab { font: bold 17px "Liberation Sans", sans-serif; fill: #5c5c5e; }
.srt { font: bold 14px "DejaVu Sans", sans-serif; fill: #5c5c5e; }
.num { font: bold 20px "Liberation Sans", sans-serif; fill: #5c5c5e; }
.omega { font: bold 26px "Liberation Sans", sans-serif; fill: #666; }
.fx { font: bold 19px "Noto Sans", sans-serif; fill: #666; }
.fxs { font: bold 14px "Noto Sans", sans-serif; fill: #777; }
.fxp { font: bold 11px "Noto Sans", sans-serif; fill: #666; }

.combo { flex: none; display: flex; height: 30px; border: 1px solid #b9bec6; border-radius: 4px; background: #fff; }
.combo input { flex: 1; min-width: 0; border: 0; outline: 0; background: none; padding: 0 4px 0 7px; font-size: 15px; }
.drop { width: 27px; border-left: 1px solid #b9bec6; }
.drop::before, .expand::before { content: ""; border: 5px solid transparent; border-top-color: #333; border-bottom: 0; }
.font { width: 144px; margin-left: 2px; margin-right: 8px; }
.combo.font input { font-size: 14px; }
.size { width: 73px; }
.name { width: 156px; }

.main { flex: 1; display: flex; }
.sheet { flex: 1; min-width: 0; display: flex; flex-direction: column; }
.formula { height: 30px; display: flex; align-items: center; padding-bottom: 2px; }
.fb { width: 25px; height: 28px; flex: none; }
.fb svg { width: 20px; height: 20px; }
.line { flex: 1; min-width: 0; height: 26px; border: 1px solid #b9bec6; border-radius: 4px; background: #fff; padding: 0 4px; font-size: 15px; }
.expand { width: 20px; height: 26px; margin: 0 5px 0 2px; border: 1px solid #b9bec6; border-radius: 4px; background: #fff; }

.gridwrap { display: flex; border-top: 1px solid #b4b5b7; }
.cells { flex: 1; width: 0; table-layout: fixed; border-spacing: 0; background: #fff; color: #000; font: 13px/15px "Liberation Sans", Arial, sans-serif; }
.c0 { width: 41px; }
.ca { width: 1295px; }
.cb { width: 176px; }
.cc { width: 191px; }
.cd { width: 36px; }
.cells th { padding: 0; font: 14px/15px "Noto Sans", sans-serif; color: #3d3d3d; border: solid #97999c; border-width: 0 1px 1px 0; overflow: hidden; }
.cells thead th { height: 20px; background: linear-gradient(#f9fbfa 50%, #f4f6f8 50%); }
.cells thead .sel { background: linear-gradient(#f39270 50%, #e95420 50%); color: #fff; font-weight: 700; border-color: #ce4a1d; }
.cells tbody th { background: linear-gradient(90deg, #fafcfb 50%, #f4f6f8 50%); vertical-align: middle; }
.cells .active th { background: linear-gradient(90deg, #f39270 50%, #e95420 50%); color: #fff; font-weight: 700; border-color: #ce4a1d; }
.cells td { position: relative; padding: 0 0 0 1px; vertical-align: bottom; white-space: pre; overflow: hidden; border: solid #c0c0c0; border-width: 0 1px 1px 0; }
.cells th.last, .cells td.last { border-right: 0; }
.cells thead th.last { padding-left: 28px; }
.h1 { height: 17px; }
.h2 { height: 31px; }
.h3 { height: 46px; }
.cells u { text-decoration: none; background: url("data:image/svg+xml,%3Csvg xmlns='http://www.w3.org/2000/svg' width='6' height='3' shape-rendering='crispEdges'%3E%3Cpath fill='red' d='M1 0h2v1H1zM0 1h1v1H0zM3 1h1v1H3zM4 2h2v1H4z'/%3E%3C/svg%3E") 0 100% repeat-x; }
.caret { display: inline-block; width: 1px; height: 13px; margin-right: -1px; background: #000080; vertical-align: -2px; }
.more { position: absolute; right: 0; top: 3px; border: 4px solid transparent; border-left-color: #5a0000; border-right: 0; }

.vscroll { flex: none; width: 12px; background: #e2e3e3; display: flex; flex-direction: column; align-items: center; }
.vscroll .split { width: 12px; height: 5px; background: linear-gradient(#000, #000) 50% 50% / 6px 1px no-repeat #b4b5b7; }
.vscroll .thumb { width: 6px; height: 38.5%; margin-top: 56px; border-radius: 3px; background: #838484; }
.hscroll { height: 12px; margin-right: 12px; padding-left: 4px; display: flex; align-items: center; justify-content: space-between; background: #e2e3e3; }
.hscroll .thumb { width: 39.6%; height: 6px; border-radius: 3px; background: #838484; }
.hscroll .split { width: 5px; height: 12px; background: linear-gradient(#000, #000) 50% 50% / 1px 6px no-repeat #b4b5b7; }
.tabs { height: 20px; display: flex; align-items: center; padding-left: 13px; gap: 11px; }
.tabs .add { margin: 0 -1px 0 6px; }
.tab { height: 20px; padding: 0 12px; background: #fff; border: 1px solid #97999c; border-top: 0; font-size: 12px; font-weight: 700; line-height: 18px; }

.side { width: 47px; flex: none; margin-bottom: 1px; display: flex; border: solid #b4b5b7; border-width: 1px 0 1px 1px; }
.sash { width: 6px; border-right: 1px solid #b4b5b7; }
.sash i { width: 6px; height: 73px; background: #9b9c9c; clip-path: polygon(0 0, 100% 0, 100% 100%, 0 100%, 0 58%, 100% 50%, 0 42%); }
.deck { flex: 1; display: flex; flex-direction: column; align-items: center; padding-top: 3px; gap: 3px; }
.sb { width: 32px; height: 32px; border: 1px solid transparent; border-radius: 4px; }
.sb svg { width: 24px; height: 24px; }
.sb.on { border-color: #b4b5b7; }
.deck hr { width: 22px; height: 1px; margin: 0; border: 0; background: #dfe1e4; }

.find { height: 39px; display: flex; align-items: center; padding: 0 0 2px 3px; font-size: 15px; }
.stop { width: 24px; margin-left: 6px; margin-right: 5px; }
.search { width: 250px; }
.combo.search input { padding-left: 7px; }
.search input::placeholder { color: #8f9092; opacity: 1; }
.all { color: #8f9092; font-size: 12px; width: 79px; justify-content: center; padding-left: 2px; margin-right: 9px; }
.find label { display: flex; align-items: center; gap: 8px; white-space: nowrap; }
.find .w1 { width: 219px; }
.find .w2 { width: 226px; }
.find [type=checkbox] { appearance: none; width: 16px; height: 16px; border: 1px solid #b9bec6; border-radius: 3px; background: #fff; }

.status { height: 21px; display: flex; border-top: 1px solid #b4b5b7; font-size: 12px; line-height: 20px; }
.status > div { position: relative; flex: none; display: flex; align-items: center; justify-content: center; }
.status > div + div::before { content: ""; position: absolute; left: 0; top: 2px; bottom: 2px; width: 1px; background: #2d2a2b; }
.status .s1 { width: 275px; padding-left: 10px; justify-content: flex-start; }
.status .s2 { flex: 1; }
.status .s3 { width: 257px; padding-left: 9px; justify-content: flex-start; }
.status .s4 { width: 241px; }
.status .s5 { width: 68px; }
.status .s6 { width: 29px; }
.status .s7 { width: 336px; }
.status .s8 { width: 142px; gap: 5px; padding-left: 2px; }
.status .s9 { width: 49px; }
.s8 input { appearance: none; width: 98px; height: 10px; background: linear-gradient(#97999c, #97999c) 0 50% / 100% 2px no-repeat; }
.s8 input::-webkit-slider-thumb { appearance: none; width: 10px; height: 10px; border: 1px solid #838484; border-radius: 5px; background: #e2e3e3; }
```
